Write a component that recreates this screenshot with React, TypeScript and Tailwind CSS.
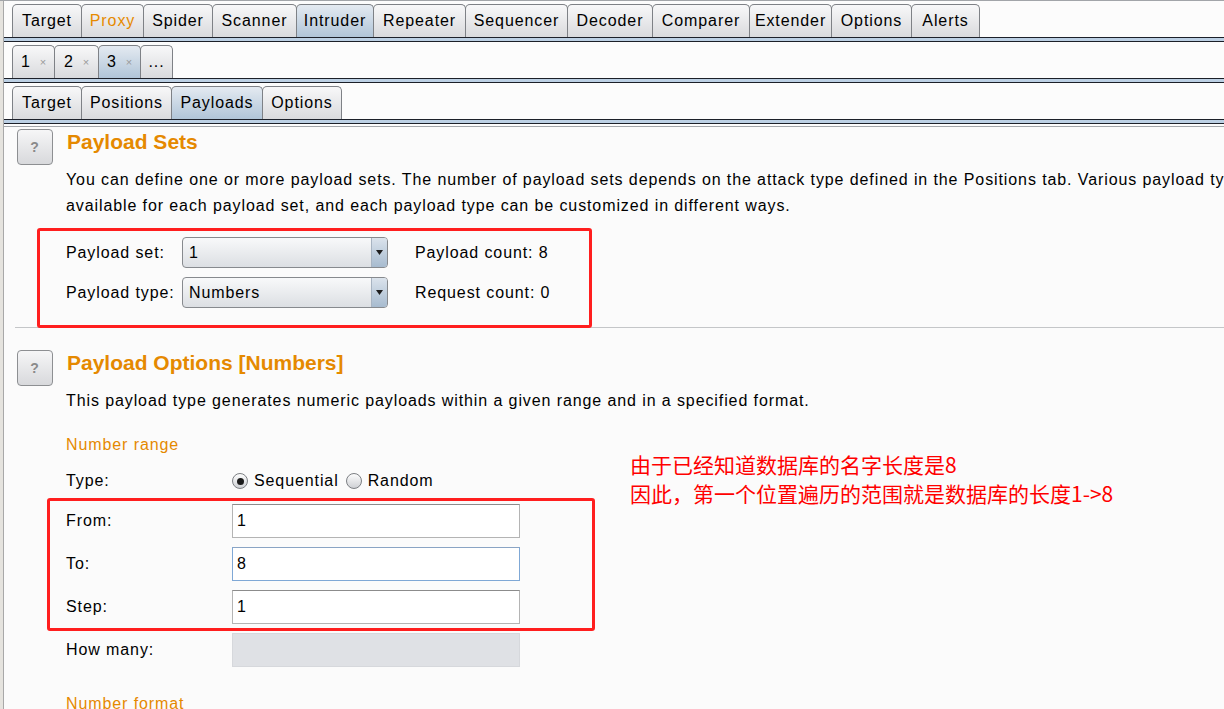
import React from 'react';

type TabDef = { label: string; w: string; selected?: boolean; orange?: boolean; close?: boolean };

const mainTabs: TabDef[] = [
  { label: 'Target', w: 'w-[70px]' },
  { label: 'Proxy', w: 'w-[63px]', orange: true },
  { label: 'Spider', w: 'w-[70px]' },
  { label: 'Scanner', w: 'w-[85px]' },
  { label: 'Intruder', w: 'w-[78px]', selected: true },
  { label: 'Repeater', w: 'w-[93px]' },
  { label: 'Sequencer', w: 'w-[103px]' },
  { label: 'Decoder', w: 'w-[86px]' },
  { label: 'Comparer', w: 'w-[98px]' },
  { label: 'Extender', w: 'w-[83px]' },
  { label: 'Options', w: 'w-[81px]' },
  { label: 'Alerts', w: 'w-[69px]' },
];

const attackTabs: TabDef[] = [
  { label: '1', w: 'w-[43px]', close: true },
  { label: '2', w: 'w-[45px]', close: true },
  { label: '3', w: 'w-[43px]', close: true, selected: true },
  { label: '...', w: 'w-[33px]' },
];

const subTabs: TabDef[] = [
  { label: 'Target', w: 'w-[70px]' },
  { label: 'Positions', w: 'w-[91px]' },
  { label: 'Payloads', w: 'w-[92px]', selected: true },
  { label: 'Options', w: 'w-[80px]' },
];

function Tab({ tab }: { tab: TabDef }) {
  return (
    <div
      className={`-mr-px flex h-[33px] items-center justify-center rounded-t-[5px] border border-b-0 border-[#7e8186] ${tab.w} ${
        tab.selected
          ? 'bg-linear-to-b from-[#e4eaf1] to-[#b1c5d8]'
          : 'bg-linear-to-b from-[#f8f8f9] to-[#d9dadd]'
      }`}
    >
      <span className={tab.orange ? 'text-[#e68a00]' : 'text-black'}>{tab.label}</span>
      {tab.close && <span className="ml-[9px] text-[11px] tracking-normal text-[#9a9a9a]">×</span>}
    </div>
  );
}

function TabRow({ tabs }: { tabs: TabDef[] }) {
  return (
    <div className="mt-[3px] flex pl-[8px]">
      {tabs.map((t) => (
        <Tab key={t.label} tab={t} />
      ))}
    </div>
  );
}

function Sep() {
  return <div className="h-[5px] border-y border-[#1c2029] bg-[#bcd0e4]" />;
}

function HelpBtn() {
  return (
    <div className="flex h-[36px] w-[36px] shrink-0 items-center justify-center rounded-[4px] border border-[#8d8f92] bg-linear-to-b from-[#f6f6f7] to-[#d8d9dc] text-[14px] font-bold text-[#8a8a8a]">
      ?
    </div>
  );
}

function Select({ value }: { value: string }) {
  return (
    <div className="flex h-[31px] w-[206px] overflow-hidden rounded-[4px] border border-[#878a8e] bg-linear-to-b from-[#f8f9fa] to-[#dcdfe3]">
      <div className="flex flex-1 items-center pl-[6px]">{value}</div>
      <div className="flex w-[16px] items-center justify-center border-l border-[#a8b4c2] bg-linear-to-b from-[#dbe3ec] to-[#a7bbcf]">
        <svg width="7" height="5" viewBox="0 0 7 5">
          <path d="M0 0h7L3.5 5z" fill="#1e1e1e" />
        </svg>
      </div>
    </div>
  );
}

function Field({ value, focused, disabled }: { value?: string; focused?: boolean; disabled?: boolean }) {
  const cls = disabled
    ? 'border-[#d6d8dc] bg-[#dfe1e5]'
    : focused
      ? 'border-[#7fa8d6] border-t-[#8aa4c4] bg-white'
      : 'border-[#b4b4b4] border-t-[#8c8c8c] bg-white';
  return (
    <div className={`flex h-[34px] w-[288px] items-center border pl-[4px] ${cls}`}>{value}</div>
  );
}

function Radio({ checked }: { checked?: boolean }) {
  return (
    <div className="flex h-[16px] w-[16px] items-center justify-center rounded-full border border-[#7c7f83] bg-linear-to-b from-[#fdfdfd] to-[#cfd1d5]">
      {checked && <div className="h-[7px] w-[7px] rounded-full bg-[#1b1b1b]" />}
    </div>
  );
}

export default function App() {
  return (
    <div className="relative flex h-[709px] w-[1224px] overflow-hidden border-t border-[#a2a5a9] bg-[#fcfcfc] font-['Liberation_Sans',Arial,sans-serif] text-[16px] tracking-[0.9px] text-black">
      <div className="w-[3px] shrink-0 bg-[#e5e3de]" />
      <div className="flex-1 border-l border-[#a8a8a8]">
        <TabRow tabs={mainTabs} />
        <Sep />
        <TabRow tabs={attackTabs} />
        <Sep />
        <TabRow tabs={subTabs} />
        <Sep />
        <div className="mt-[2px] h-px bg-[#a4a7ab]" />

        <div className="bg-[#fbfbfb]">
          {/* Payload Sets */}
          <div className="flex pl-[13px] pt-[2px]">
            <HelpBtn />
            <div className="ml-[13px] flex-1">
              <h2 className="mt-[1px] pl-px text-[21px] font-bold leading-[24px] tracking-normal text-[#e58900]">
                Payload Sets
              </h2>
              <p className="mt-[13px] whitespace-nowrap leading-[26px]">
                You can define one or more payload sets. The number of payload sets depends on the attack type defined in the Positions tab. Various payload types are
                <br />
                available for each payload set, and each payload type can be customized in different ways.
              </p>
              <div className="relative mt-[18px] grid grid-cols-[116px_206px_auto] items-center gap-y-[9px]">
                <span>Payload set:</span>
                <Select value="1" />
                <span className="pl-[27px]">Payload count: 8</span>
                <span>Payload type:</span>
                <Select value="Numbers" />
                <span className="pl-[27px]">Request count: 0</span>
                <div className="absolute left-[-29px] top-[-9px] h-[100px] w-[555px] rounded-[3px] border-[3px] border-[#ff1e1e]" />
              </div>
            </div>
          </div>

          <div className="ml-[11px] mt-[19px] h-px bg-[#c4c6c8]" />

          {/* Payload Options */}
          <div className="flex pl-[13px] pt-[22px]">
            <HelpBtn />
            <div className="ml-[13px] flex-1">
              <h2 className="mt-[1px] pl-px text-[21px] font-bold leading-[24px] tracking-normal text-[#e58900]">
                Payload Options [Numbers]
              </h2>
              <p className="mt-[13px] whitespace-nowrap leading-[26px]">
                This payload type generates numeric payloads within a given range and in a specified format.
              </p>
              <p className="mt-[18px] leading-[26px] text-[#e58900]">Number range</p>
              <div className="mt-[10px] grid h-[26px] grid-cols-[166px_auto] items-center">
                <span>Type:</span>
                <div className="flex items-center">
                  <Radio checked />
                  <span className="ml-[6px]">Sequential</span>
                  <span className="ml-[7px]">
                    <Radio />
                  </span>
                  <span className="ml-[6px]">Random</span>
                </div>
              </div>
              <div className="relative mt-[10px] grid grid-cols-[166px_auto] items-center gap-y-[9px]">
                <span>From:</span>
                <Field value="1" />
                <span>To:</span>
                <Field value="8" focused />
                <span>Step:</span>
                <Field value="1" />
                <div className="absolute left-[-19px] top-[-6px] h-[133px] w-[548px] rounded-[3px] border-[3px] border-[#ff1e1e]" />
              </div>
              <div className="mt-[9px] grid grid-cols-[166px_auto] items-center">
                <span>How many:</span>
                <Field disabled />
              </div>
              <p className="mt-[24px] leading-[26px] text-[#e58900]">Number format</p>
            </div>
          </div>
        </div>
      </div>

      <div className="absolute left-[630px] top-[449px] font-['Noto_Sans_CJK_SC',sans-serif] text-[21px] leading-[29px] tracking-normal text-[#ff0000]">
        <div>由于已经知道数据库的名字长度是8</div>
        <div>因此，第一个位置遍历的范围就是数据库的长度1-&gt;8</div>
      </div>
    </div>
  );
}
